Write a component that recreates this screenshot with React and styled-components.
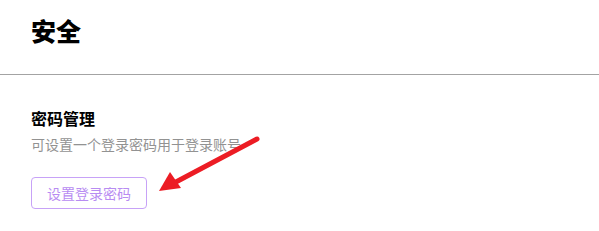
import React from "react";
import styled, { createGlobalStyle } from "styled-components";

const Global = createGlobalStyle`
  html, body { margin: 0; padding: 0; background: #fff; }
  body { font-family: "Noto Sans CJK SC", "Noto Sans", sans-serif; }
`;

const Page = styled.div`
  position: relative;
  width: 599px;
  height: 231px;
  overflow: hidden;
  background: #fff;
`;

const Header = styled.header`
  box-sizing: border-box;
  height: 75px;
  padding: 14px 31px 0;
  border-bottom: 1px solid #a3a3a3;
`;

const Title = styled.h1`
  margin: 0;
  font-size: 25px;
  line-height: 32px;
  font-weight: 900;
  color: #000;
`;

const Section = styled.section`
  padding: 31px 31px 0;
  display: flex;
  flex-direction: column;
  align-items: flex-start;
`;

const SectionTitle = styled.h2`
  margin: 0;
  font-size: 16px;
  line-height: 24px;
  font-weight: 700;
  color: #000;
`;

const Desc = styled.p`
  margin: 3px 0 0;
  font-size: 14px;
  line-height: 22px;
  color: #929292;
`;

const Button = styled.button`
  margin-top: 22px;
  box-sizing: border-box;
  width: 116px;
  height: 32px;
  padding: 0;
  border: 1px solid #c7a2f7;
  border-radius: 4px;
  background: #fff;
  color: #b88cf2;
  font-family: inherit;
  font-size: 14px;
  line-height: 30px;
  cursor: pointer;
`;

const Arrow = styled.svg`
  position: absolute;
  left: 0;
  top: 0;
  pointer-events: none;
`;

export default function App() {
  return (
    <>
      <Global />
      <Page>
        <Header>
          <Title>安全</Title>
        </Header>
        <Section>
          <SectionTitle>密码管理</SectionTitle>
          <Desc>可设置一个登录密码用于登录账号</Desc>
          <Button>设置登录密码</Button>
        </Section>
        <Arrow width="599" height="231" viewBox="0 0 599 231">
          <line x1="257" y1="139" x2="174" y2="183" stroke="#ec1c24" strokeWidth="5" strokeLinecap="round" />
          <polygon points="159,191 170,172 181,188" fill="#ec1c24" />
        </Arrow>
      </Page>
    </>
  );
}
